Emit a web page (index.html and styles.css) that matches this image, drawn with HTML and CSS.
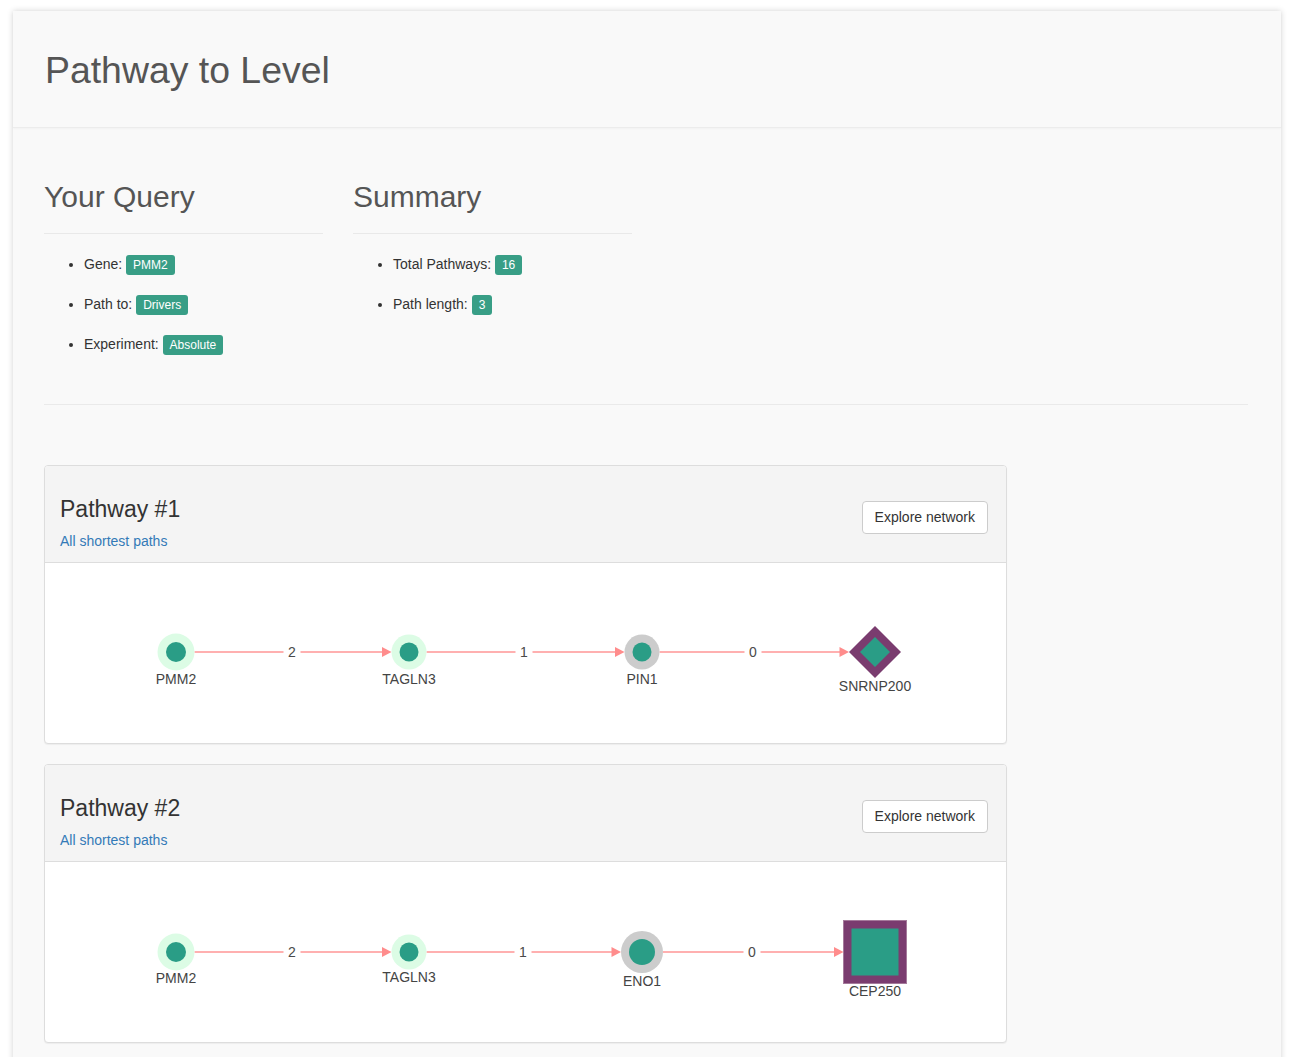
FILE: index.html
```html
<!DOCTYPE html>
<html lang="en">
<head>
<meta charset="utf-8">
<title>Pathway to Level</title>
<link rel="stylesheet" href="styles.css">
</head>
<body>
<div class="page">
  <header class="page-header">
    <h1>Pathway to Level</h1>
  </header>
  <main class="content">
    <div class="overview">
      <section class="col">
        <h2>Your Query</h2>
        <hr class="rule">
        <ul class="facts">
          <li>Gene: <span class="badge">PMM2</span></li>
          <li>Path to: <span class="badge">Drivers</span></li>
          <li>Experiment: <span class="badge">Absolute</span></li>
        </ul>
      </section>
      <section class="col">
        <h2>Summary</h2>
        <hr class="rule">
        <ul class="facts">
          <li>Total Pathways: <span class="badge">16</span></li>
          <li>Path length: <span class="badge">3</span></li>
        </ul>
      </section>
    </div>
    <hr class="divider">
    <div class="cards">
      <article class="card">
        <div class="card-head">
          <div class="card-title">
            <h3>Pathway #1</h3>
            <a class="card-link" href="#">All shortest paths</a>
          </div>
          <button class="btn" type="button">Explore network</button>
        </div>
        <div class="card-body">
          <svg class="graph" width="961" height="180" viewBox="0 0 961 180">
            <line class="edge" x1="149.5" y1="89" x2="337.5" y2="89"/>
            <polygon class="arrow" points="346.5,89 337,84 337,94"/>
            <rect class="edge-bg" x="238.5" y="80" width="17" height="18"/>
            <text class="edge-label" x="247" y="94">2</text>

            <line class="edge" x1="381.5" y1="89" x2="570.5" y2="89"/>
            <polygon class="arrow" points="579.5,89 570,84 570,94"/>
            <rect class="edge-bg" x="470.5" y="80" width="17" height="18"/>
            <text class="edge-label" x="479" y="94">1</text>

            <line class="edge" x1="614.5" y1="89" x2="795" y2="89"/>
            <polygon class="arrow" points="804,89 794.5,84 794.5,94"/>
            <rect class="edge-bg" x="699.5" y="80" width="17" height="18"/>
            <text class="edge-label" x="708" y="94">0</text>

            <circle class="halo-mint" cx="131" cy="89" r="18.5"/>
            <circle class="core" cx="131" cy="89" r="10"/>
            <text class="node-label" x="131" y="121">PMM2</text>

            <circle class="halo-mint" cx="364" cy="89" r="17.5"/>
            <circle class="core" cx="364" cy="89" r="9.5"/>
            <text class="node-label" x="364" y="120.5">TAGLN3</text>

            <circle class="halo-grey" cx="597" cy="89" r="17.5"/>
            <circle class="core" cx="597" cy="89" r="9.5"/>
            <text class="node-label" x="597" y="120.5">PIN1</text>

            <polygon class="target" points="830,63 856,89 830,115 804,89"/>
            <polygon class="core" points="830,74 845,89 830,104 815,89"/>
            <text class="node-label" x="830" y="128">SNRNP200</text>
          </svg>
        </div>
      </article>

      <article class="card">
        <div class="card-head">
          <div class="card-title">
            <h3>Pathway #2</h3>
            <a class="card-link" href="#">All shortest paths</a>
          </div>
          <button class="btn" type="button">Explore network</button>
        </div>
        <div class="card-body">
          <svg class="graph" width="961" height="180" viewBox="0 0 961 180">
            <line class="edge" x1="149.5" y1="90" x2="337.5" y2="90"/>
            <polygon class="arrow" points="346.5,90 337,85 337,95"/>
            <rect class="edge-bg" x="238.5" y="81" width="17" height="18"/>
            <text class="edge-label" x="247" y="95">2</text>

            <line class="edge" x1="381.5" y1="90" x2="567" y2="90"/>
            <polygon class="arrow" points="576,90 566.5,85 566.5,95"/>
            <rect class="edge-bg" x="469.5" y="81" width="17" height="18"/>
            <text class="edge-label" x="478" y="95">1</text>

            <line class="edge" x1="618" y1="90" x2="789.5" y2="90"/>
            <polygon class="arrow" points="798.5,90 789,85 789,95"/>
            <rect class="edge-bg" x="698.5" y="81" width="17" height="18"/>
            <text class="edge-label" x="707" y="95">0</text>

            <circle class="halo-mint" cx="131" cy="90" r="18.5"/>
            <circle class="core" cx="131" cy="90" r="10"/>
            <text class="node-label" x="131" y="120.5">PMM2</text>

            <circle class="halo-mint" cx="364" cy="90" r="17.5"/>
            <circle class="core" cx="364" cy="90" r="9.5"/>
            <text class="node-label" x="364" y="120">TAGLN3</text>

            <circle class="halo-grey" cx="597" cy="90" r="21"/>
            <circle class="core" cx="597" cy="90" r="13"/>
            <text class="node-label" x="597" y="124">ENO1</text>

            <rect class="target-edge" x="798.5" y="58.5" width="63" height="63"/>
            <rect class="core" x="806.5" y="66.5" width="47" height="47"/>
            <text class="node-label" x="830" y="133.5">CEP250</text>
          </svg>
        </div>
      </article>
    </div>
  </main>
</div>
</body>
</html>
```

FILE: styles.css
```css
html, body {
  margin: 0;
  padding: 0;
}

body {
  background: #ffffff;
  font-family: "Liberation Sans", Arial, Helvetica, sans-serif;
  font-size: 14px;
  line-height: 20px;
  color: #333333;
}

.page {
  margin: 11px 13px 0;
  background: #f9f9f9;
  box-shadow: 0 0 6px rgba(0, 0, 0, 0.18);
  min-height: 1120px;
}

.page-header {
  padding: 38px 30px 36px 32px;
  border-bottom: 1px solid #ececec;
  box-shadow: 0 1px 2px rgba(0, 0, 0, 0.03);
}

.page-header h1 {
  margin: 0;
  font-size: 37.4px;
  line-height: 42px;
  font-weight: 400;
  color: #555555;
}

.content {
  padding: 0 33px 40px 31px;
}

.overview {
  display: grid;
  grid-template-columns: 279px 279px;
  column-gap: 30px;
}

.col h2 {
  margin: 52px 0 0;
  font-size: 30px;
  line-height: 33px;
  font-weight: 400;
  color: #555555;
}

.rule {
  margin: 20px 0 0;
  border: 0;
  border-top: 1px solid #e9e9e9;
  height: 0;
}

.facts {
  margin: 20px 0 0;
  padding-left: 40px;
  list-style: disc;
}

.facts li {
  height: 20px;
  line-height: 20px;
}

.facts li + li {
  margin-top: 20px;
}

.badge {
  display: inline-block;
  vertical-align: 0;
  background: #389e86;
  color: #ffffff;
  font-size: 12px;
  line-height: 14px;
  padding: 3px 7px;
  border-radius: 3px;
}

.divider {
  margin: 50px 0 0;
  border: 0;
  border-top: 1px solid #eaeaea;
  height: 0;
}

.cards {
  margin-top: 60px;
  width: 963px;
  display: flex;
  flex-direction: column;
  gap: 20px;
}

.card {
  border: 1px solid #dddddd;
  border-radius: 4px;
  background: #ffffff;
  box-shadow: 0 1px 1px rgba(0, 0, 0, 0.05);
  overflow: hidden;
}

.card-head {
  display: flex;
  justify-content: space-between;
  align-items: flex-start;
  background: #f4f4f4;
  border-bottom: 1px solid #dddddd;
  padding: 30px 18px 11px 15px;
}

.card-title h3 {
  margin: 0;
  font-size: 23px;
  line-height: 26px;
  font-weight: 400;
  color: #333333;
}

.card-link {
  display: block;
  margin-top: 9px;
  color: #337ab7;
  text-decoration: none;
  line-height: 20px;
}

.btn {
  margin-top: 5px;
  background: #ffffff;
  border: 1px solid #cccccc;
  border-radius: 4px;
  padding: 6px 12px;
  font-family: "Liberation Sans", Arial, Helvetica, sans-serif;
  font-size: 14px;
  line-height: 19px;
  color: #333333;
}

.card-body {
  height: 180px;
}

.graph {
  display: block;
}

.edge {
  stroke: #ffb0b0;
  stroke-width: 2;
}

.arrow {
  fill: #ff8c8c;
}

.edge-bg {
  fill: #ffffff;
}

.edge-label {
  font-family: "Liberation Sans", Arial, sans-serif;
  font-size: 14px;
  fill: #4a4a4a;
  text-anchor: middle;
}

.node-label {
  font-family: "Liberation Sans", Arial, sans-serif;
  font-size: 14px;
  fill: #444444;
  text-anchor: middle;
}

.halo-mint {
  fill: #dcfce5;
}

.halo-grey {
  fill: #cccccc;
}

.core {
  fill: #2a9d86;
}

.target {
  fill: #7a3c6f;
}

.target-edge {
  fill: #7a3c6f;
  stroke: #a57a9b;
  stroke-width: 1;
}
```
